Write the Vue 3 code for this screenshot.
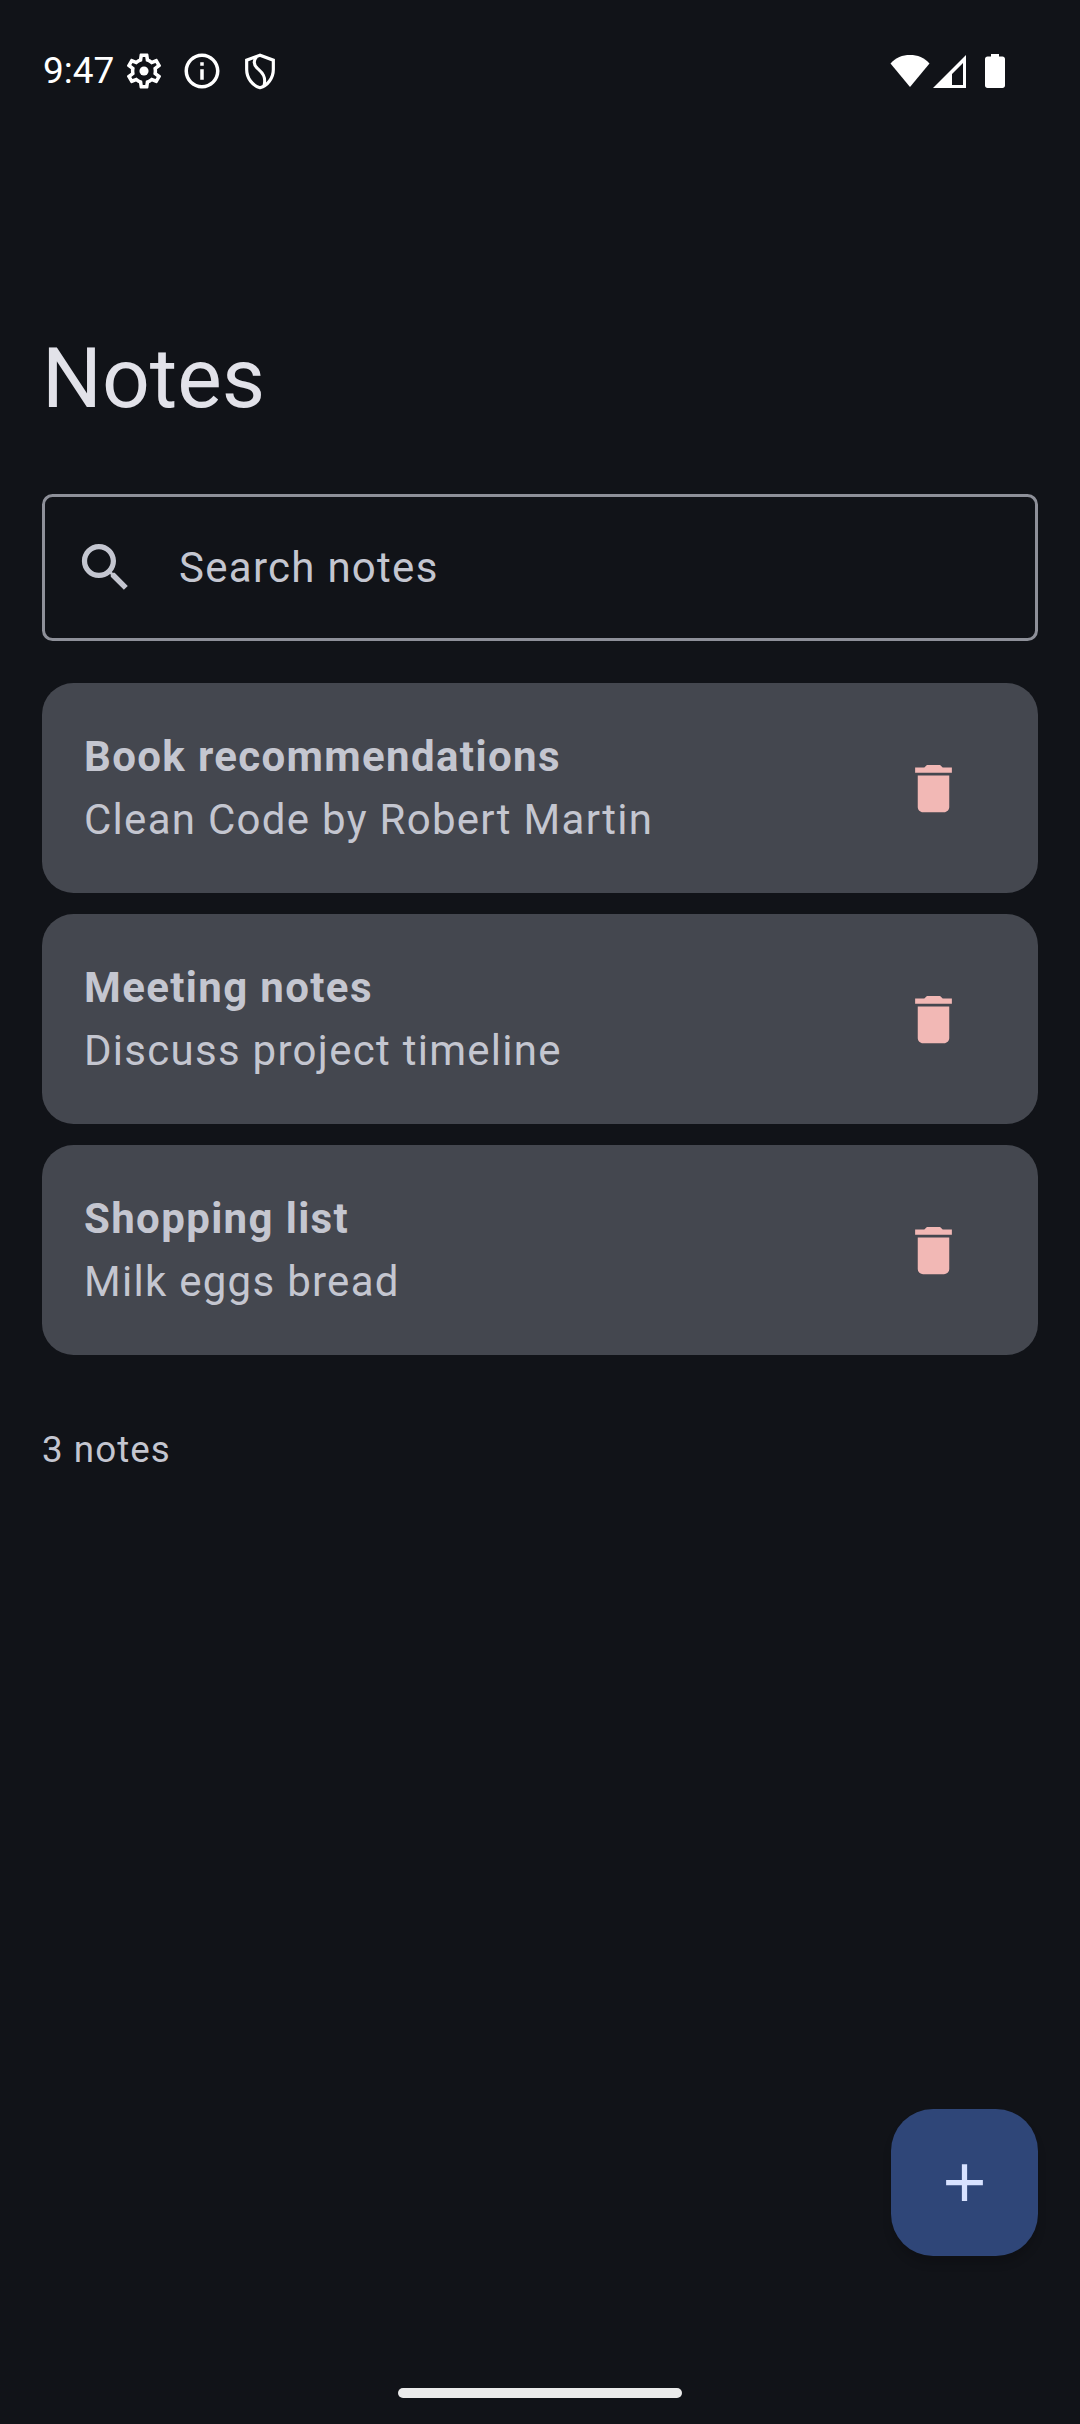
<script setup>
const notes = [
  { title: 'Book recommendations', body: 'Clean Code by Robert Martin' },
  { title: 'Meeting notes', body: 'Discuss project timeline' },
  { title: 'Shopping list', body: 'Milk eggs bread' },
];
</script>

<template>
  <div class="page">
    <div class="status">
      <span class="time">9:47</span>
      <svg class="ic gear" viewBox="0 0 24 24"><path d="M19.43 12.98c.04-.32.07-.64.07-.98s-.03-.66-.07-.98l2.11-1.65c.19-.15.24-.42.12-.64l-2-3.46c-.12-.22-.39-.3-.61-.22l-2.49 1c-.52-.4-1.08-.73-1.69-.98l-.38-2.65C14.46 2.18 14.25 2 14 2h-4c-.25 0-.46.18-.49.42l-.38 2.65c-.61.25-1.17.59-1.69.98l-2.49-1c-.23-.09-.49 0-.61.22l-2 3.46c-.13.22-.07.49.12.64l2.11 1.65c-.04.32-.07.65-.07.98s.03.66.07.98l-2.11 1.65c-.19.15-.24.42-.12.64l2 3.46c.12.22.39.3.61.22l2.49-1c.52.4 1.08.73 1.69.98l.38 2.65c.03.24.24.42.49.42h4c.25 0 .46-.18.49-.42l.38-2.65c.61-.25 1.17-.59 1.69-.98l2.49 1c.23.09.49 0 .61-.22l2-3.46c.12-.22.07-.49-.12-.64l-2.11-1.65zM17.45 11.27c.04.31.05.52.05.73s-.02.43-.05.73l-.14 1.13.89.7 1.08.84-.7 1.21-1.27-.51-1.04-.42-.9.68c-.43.32-.84.56-1.25.73l-1.06.43-.16 1.13-.2 1.35h-1.4l-.19-1.35-.16-1.13-1.06-.43c-.43-.18-.83-.41-1.23-.71l-.91-.7-1.06.43-1.27.51-.7-1.21 1.08-.84.89-.7-.14-1.13c-.03-.31-.05-.54-.05-.74s.02-.43.05-.73l.14-1.13-.89-.7-1.08-.84.7-1.21 1.27.51 1.04.42.9-.68c.43-.32.84-.56 1.25-.73l1.06-.43.16-1.13.2-1.35h1.39l.19 1.35.16 1.13 1.06.43c.43.18.83.41 1.23.71l.91.7 1.06-.43 1.27-.51.7 1.21-1.07.85-.89.7.14 1.13z"/><circle cx="12" cy="12" r="2.6"/></svg>
      <svg class="ic info" viewBox="0 0 24 24"><path d="M11 7h2v2h-2zm0 4h2v6h-2zm1-9C6.48 2 2 6.48 2 12s4.48 10 10 10 10-4.48 10-10S17.52 2 12 2zm0 18c-4.41 0-8-3.59-8-8s3.59-8 8-8 8 3.59 8 8-3.59 8-8 8z"/></svg>
      <svg class="ic shield" viewBox="0 0 24 24"><path d="M12 2.500 4 5.500v5.600c0 5.050 3.410 9.760 8 10.900 4.590-1.140 8-5.850 8-10.900V5.500l-8-3z" fill="none" stroke="#fff" stroke-width="1.900"/><path d="M10 3.500C7.800 6 8.400 8.600 10.600 10.600c2.300 2.100 5.300 4.200 3.800 10.200" fill="none" stroke="#fff" stroke-width="1.800"/></svg>
      <span class="spacer"></span>
      <svg class="wifi" viewBox="0 0 40 33"><path d="M0.500 9.500C5.500 3.500 12.500 1 20 1s14.500 2.500 19.500 8.500L20 33 0.500 9.500z"/></svg>
      <svg class="signal" viewBox="0 0 33 33"><path fill-rule="evenodd" d="M33 0v33H0L33 0zM30 8 19 19v11h11V8z"/></svg>
      <svg class="battery" viewBox="0 0 20 34"><path d="M6 0h8v2.500h3.500c1.400 0 2.500 1.100 2.500 2.500v26.500c0 1.400-1.100 2.500-2.500 2.500h-15C1.100 34 0 32.900 0 31.500V5c0-1.400 1.100-2.500 2.500-2.500H6V0z"/></svg>
    </div>

    <main class="content">
      <h1 class="heading">Notes</h1>

      <div class="search">
        <svg class="search-icon" viewBox="0 0 24 24"><path d="M15.500 14h-.79l-.28-.27C15.410 12.590 16 11.110 16 9.500 16 5.910 13.090 3 9.500 3S3 5.910 3 9.500 5.910 16 9.500 16c1.610 0 3.090-.59 4.230-1.570l.27.28v.79l5 4.990L20.490 19l-4.990-5zm-6 0C7.010 14 5 11.990 5 9.500S7.010 5 9.500 5 14 7.010 14 9.500 11.990 14 9.500 14z"/></svg>
        <span class="placeholder">Search notes</span>
      </div>

      <div class="list">
        <div v-for="n in notes" :key="n.title" class="card">
          <div class="card-text">
            <div class="card-title">{{ n.title }}</div>
            <div class="card-body">{{ n.body }}</div>
          </div>
          <svg class="trash" viewBox="0 0 24 24"><path d="M6 19c0 1.100.9 2 2 2h8c1.100 0 2-.9 2-2V7H6v12zM19 4h-3.500l-1-1h-5l-1 1H5v2h14V4z"/></svg>
        </div>
      </div>

      <p class="count">3 notes</p>
    </main>

    <div class="fab-row">
      <button class="fab">
        <svg viewBox="0 0 24 24"><path d="M19 13h-6v6h-2v-6H5v-2h6V5h2v6h6v2z"/></svg>
      </button>
    </div>

    <div class="nav"><span class="home"></span></div>
  </div>
</template>

<style>
html, body { background: #111318; }
</style>

<style scoped>
.page {
  height: 2424px;
  display: flex;
  flex-direction: column;
  background: #111318;
  font-family: Roboto, sans-serif;
  overflow: hidden;
}
.status {
  height: 142px;
  flex: none;
  display: flex;
  align-items: flex-start;
  padding: 51px 75px 0 43px;
  box-sizing: border-box;
  color: #fff;
}
.time { font-size: 37px; line-height: 40px; }
.ic { fill: #fff; flex: none; }
.gear { width: 42px; height: 42px; margin-left: 9px; margin-top: -1px; }
.info { width: 42px; height: 42px; margin-left: 16px; margin-top: -1px; }
.shield { width: 40px; height: 40px; margin-left: 17px; }
.spacer { flex: 1; }
.wifi { width: 40px; height: 33px; fill: #fff; margin-top: 3px; }
.signal { width: 33px; height: 33px; fill: #fff; margin-left: 3px; margin-top: 4px; }
.battery { width: 20px; height: 34px; fill: #fff; margin-left: 19px; margin-top: 3px; }

.content { flex: 1; padding: 0 42px; min-height: 0; }
.heading {
  margin: 0;
  padding-top: 184px;
  font-size: 84px;
  line-height: 105px;
  font-weight: 400;
  color: #e2e2e9;
}
.search {
  margin-top: 63px;
  height: 147px;
  box-sizing: border-box;
  border: 3px solid #8e9099;
  border-radius: 10.5px;
  display: flex;
  align-items: center;
  color: #c4c6d0;
}
.search-icon { width: 63px; height: 63px; margin-left: 29px; fill: #c4c6d0; flex: none; }
.placeholder { margin-left: 42px; font-size: 42px; line-height: 63px; letter-spacing: 1.28px; }
.list { margin-top: 42px; display: flex; flex-direction: column; gap: 21px; }
.card {
  height: 210px;
  box-sizing: border-box;
  padding: 0 42px;
  background: #44474f;
  border-radius: 31.5px;
  display: flex;
  align-items: center;
  justify-content: space-between;
}
.card-title { font-size: 42px; line-height: 63px; font-weight: 700; letter-spacing: 1.36px; color: #c4c6d0; }
.card-body { font-size: 42px; line-height: 63px; letter-spacing: 1.28px; color: #c4c6d0; }
.trash { width: 63px; height: 63px; fill: #f2b8b5; margin-right: 31px; flex: none; }
.count { margin: 69px 0 0; font-size: 36.750px; line-height: 52px; letter-spacing: 1.05px; color: #c4c6d0; }

.fab-row { flex: none; display: flex; justify-content: flex-end; padding: 0 42px 0 0; }
.fab {
  width: 147px;
  height: 147px;
  border: 0;
  padding: 0;
  border-radius: 42px;
  background: #2f4678;
  box-shadow: 0 8px 8px rgba(0, 0, 0, 0.15);
  display: flex;
  align-items: center;
  justify-content: center;
}
.fab svg { width: 63px; height: 63px; fill: #d8e2ff; }
.nav { flex: none; height: 168px; display: flex; justify-content: center; padding-top: 132px; box-sizing: border-box; }
.home { width: 284px; height: 10px; border-radius: 5px; background: #ebebeb; }
</style>
